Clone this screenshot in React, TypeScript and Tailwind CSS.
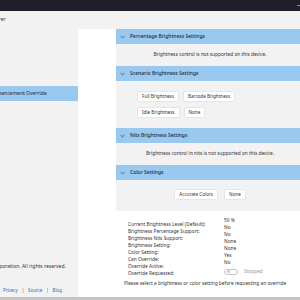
import { ReactNode } from 'react'

const font = { fontFamily: '"Noto Sans", "Open Sans", sans-serif' }

const statusRows = [
  ['Current Brightness Level (Default):', '50 %'],
  ['Brightness Percentage Support:', 'No'],
  ['Brightness Nits Support:', 'No'],
  ['Brightness Setting:', 'None'],
  ['Color Setting:', 'None'],
  ['Can Override:', 'Yes'],
  ['Override Active:', 'No'],
]

function Chevron() {
  return (
    <svg width="5" height="4" viewBox="0 0 5 4" className="shrink-0">
      <path d="M0.6 1 L2.5 2.8 L4.4 1" fill="none" stroke="#333" strokeWidth="0.7" />
    </svg>
  )
}

function SectionHeader({ title }: { title: string }) {
  return (
    <div className="flex h-[15px] items-center gap-[5px] bg-[#99c9ef] pl-[4px]">
      <Chevron />
      <span className="text-[5px] font-medium text-[#1b2a3a]">{title}</span>
    </div>
  )
}

function Btn({ children }: { children: ReactNode }) {
  return (
    <div className="flex h-[11px] items-center rounded-[1px] border border-[#e6e6e6] bg-white px-[4px] text-[4.6px] text-[#333]">
      {children}
    </div>
  )
}

export default function App() {
  return (
    <div className="flex h-[300px] w-[300px] flex-col overflow-hidden bg-white" style={font}>
      {/* title bar */}
      <div className="flex h-[11px] shrink-0 items-center justify-end bg-[#1f1f2b]">
        <div className="h-[1px] w-[3px] bg-[#8a8a95]" />
      </div>
      {/* app header */}
      <div className="flex h-[18px] shrink-0 items-center overflow-hidden bg-[#f2f2f2]">
        <span className="-ml-[14px] whitespace-nowrap text-[5px] text-[#333]">Explorer</span>
      </div>

      <div className="flex min-h-0 flex-1">
        {/* nav pane */}
        <div className="flex w-[78px] shrink-0 flex-col overflow-hidden bg-[#f2f2f2]">
          <div className="mt-[57px] flex h-[15px] items-center bg-[#99c9ef]">
            <span className="-ml-[26px] whitespace-nowrap text-[5px] text-[#1b2a3a]">
              Display Enhancement Override
            </span>
          </div>
          <div className="flex-1" />
          <div className="flex h-[8px] items-center">
            <span className="-ml-[38px] whitespace-nowrap text-[5px] text-[#333]">
              © Microsoft Corporation. All rights reserved.
            </span>
          </div>
          <div className="mt-[15px] flex h-[8px] items-center gap-[4px] pl-[3px] text-[4.4px] text-[#2f66b3]">
            <span>Privacy</span>
            <span className="text-[#555]">|</span>
            <span>Source</span>
            <span className="text-[#555]">|</span>
            <span>Blog</span>
          </div>
          <div className="h-[3px]" />
        </div>

        <div className="w-[38px] shrink-0" />

        {/* content */}
        <div className="flex w-[188px] shrink-0 flex-col">
          <SectionHeader title="Percentage Brightness Settings" />
          <div className="flex h-[22px] items-center justify-center bg-[#f2f2f2] text-[4.8px] text-[#333]">
            Brightness control is not supported on this device.
          </div>

          <SectionHeader title="Scenario Brightness Settings" />
          <div className="flex h-[47px] flex-col gap-[5px] bg-[#f2f2f2] pl-[21px] pt-[10px]">
            <div className="flex gap-[4px]">
              <Btn>Full Brightness</Btn>
              <Btn>Barcode Brightness</Btn>
            </div>
            <div className="flex gap-[4px]">
              <Btn>Idle Brightness</Btn>
              <Btn>None</Btn>
            </div>
          </div>

          <SectionHeader title="Nits Brightness Settings" />
          <div className="flex h-[22px] items-center justify-center bg-[#f2f2f2] text-[4.8px] text-[#333]">
            Brightness control in nits is not supported on this device.
          </div>

          <SectionHeader title="Color Settings" />
          <div className="flex h-[31px] justify-center gap-[6px] bg-[#f2f2f2] pt-[9px]">
            <Btn>Accurate Colors</Btn>
            <Btn>None</Btn>
          </div>

          {/* status */}
          <div className="mt-[6px] flex pl-[12px] text-[4.8px] leading-[7px] text-[#333]">
            <div className="flex w-[96px] flex-col pt-[4px]">
              {statusRows.map(([label]) => (
                <div key={label}>{label}</div>
              ))}
              <div>Override Requested:</div>
            </div>
            <div className="flex flex-col">
              {statusRows.map(([label, value]) => (
                <div key={label}>{value}</div>
              ))}
              <div className="mt-[1px] flex h-[9px] items-center gap-[6px]">
                <div className="flex h-[6px] w-[14px] items-center rounded-full border-[0.6px] border-[#c8c8c8] pl-[1.5px]">
                  <div className="h-[3.5px] w-[3.5px] rounded-full bg-[#c8c8c8]" />
                </div>
                <span className="text-[#9a9a9a]">Stopped</span>
              </div>
            </div>
          </div>
          <div className="mt-[3px] pl-[8px] text-[4.8px] leading-[7px] text-[#333]">
            Please select a brightness or color setting before requesting an override
          </div>
        </div>
      </div>
      <div className="h-[3px] shrink-0 bg-[#c4c4c4]" />
    </div>
  )
}
